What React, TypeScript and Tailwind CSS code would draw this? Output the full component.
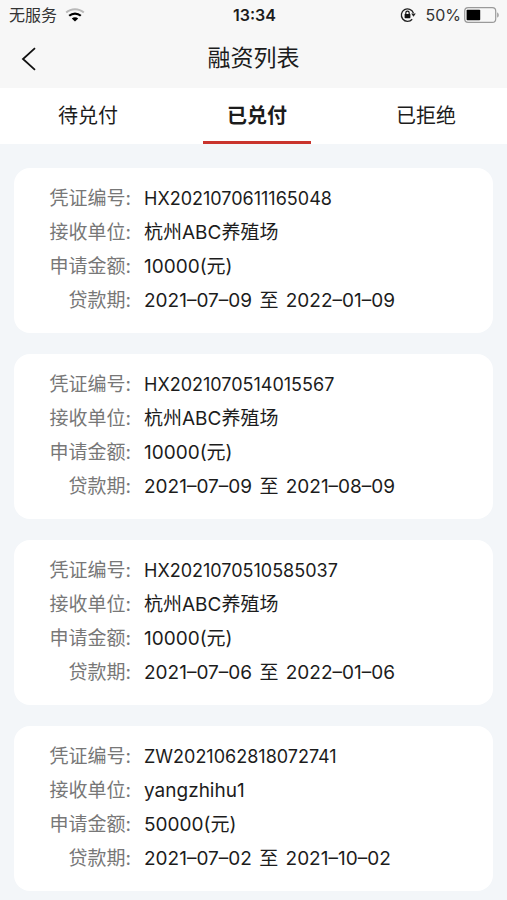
import { useState } from 'react';
import type { ReactNode } from 'react';

const tabs = ['待兑付', '已兑付', '已拒绝'];

const records = [
  { id: 'HX2021070611165048', receiver: '杭州ABC养殖场', amount: 10000, start: '2021–07–09', end: '2022–01–09' },
  { id: 'HX2021070514015567', receiver: '杭州ABC养殖场', amount: 10000, start: '2021–07–09', end: '2021–08–09' },
  { id: 'HX2021070510585037', receiver: '杭州ABC养殖场', amount: 10000, start: '2021–07–06', end: '2022–01–06' },
  { id: 'ZW2021062818072741', receiver: 'yangzhihu1', amount: 50000, start: '2021–07–02', end: '2021–10–02' },
];

function WifiIcon() {
  return (
    <svg width="20" height="14" viewBox="0 0 20 14" fill="none" aria-hidden="true">
      <path d="M1.2 4.6C6.2 0 13.8 0 18.8 4.6" stroke="#b9b9b9" strokeWidth="2" />
      <path d="M4.2 7.8c3.4-3 8.2-3 11.6 0" stroke="#000" strokeWidth="2.2" />
      <path d="M6.8 10.6c1.9-1.7 4.5-1.7 6.4 0L10 13.6z" fill="#000" />
    </svg>
  );
}

function RotationLockIcon() {
  return (
    <svg width="16" height="16" viewBox="0 0 16 16" fill="none" aria-hidden="true">
      <path d="M12.2 12.2A6.2 6.2 0 1 1 13.4 6" stroke="#222" strokeWidth="1.3" />
      <path d="M11.2 6.6h4.6l-2.3 3.2z" fill="#222" />
      <rect x="4.6" y="7" width="5.8" height="4.2" rx="0.6" fill="#111" />
      <path d="M5.8 7.2V5.9a1.7 1.7 0 0 1 3.4 0v1.3" stroke="#111" strokeWidth="1.2" />
    </svg>
  );
}

function BatteryIcon() {
  return (
    <svg width="36" height="16" viewBox="0 0 36 16" fill="none" aria-hidden="true">
      <rect x="0.7" y="0.7" width="31" height="14.6" rx="3.4" stroke="#9a9a9a" strokeWidth="1.2" />
      <rect x="2.6" y="2.8" width="13.6" height="10.4" rx="0.8" fill="#000" />
      <path d="M33.2 5.4c2 .6 2 4.6 0 5.2z" fill="#9a9a9a" />
    </svg>
  );
}

function Row({ label, children }: { label: string; children: ReactNode }) {
  return (
    <div className="flex">
      <dt className="w-[117px] shrink-0 text-right text-[#777]">{label}:</dt>
      <dd className="ml-[13px] text-[#1c1c1c]">{children}</dd>
    </div>
  );
}

export default function App() {
  const [active, setActive] = useState(1);

  return (
    <div className="min-h-screen bg-[#f3f6f9] font-['Inter','Noto_Sans_CJK_SC',sans-serif] text-[#1c1c1c]">
      <header className="bg-[#f7f7f7]">
        {/* Status bar */}
        <div className="grid h-[29px] grid-cols-[1fr_auto_1fr] items-center pr-[7px] pl-[9px] text-base">
          <div className="flex items-center gap-2 text-[#333]">
            <span>无服务</span>
            <WifiIcon />
          </div>
          <span className="font-semibold">13:34</span>
          <div className="flex items-center justify-end">
            <RotationLockIcon />
            <span className="mr-[3px] ml-[9px] text-[#333]">50%</span>
            <BatteryIcon />
          </div>
        </div>

        {/* Title bar */}
        <div className="grid h-[59px] grid-cols-[60px_1fr_60px] items-center">
          <button type="button" aria-label="返回" className="flex h-full items-center pl-[21px]">
            <svg width="16" height="24" viewBox="0 0 16 24" fill="none" aria-hidden="true">
              <path d="M14 1.2 2 12l12 10.8" stroke="#111" strokeWidth="1.8" />
            </svg>
          </button>
          <h1 className="text-center text-[23px]">融资列表</h1>
        </div>
      </header>

      <nav className="flex h-14 justify-between bg-white pr-[27px] pl-[34px]">
        {tabs.map((tab, i) => (
          <button
            key={tab}
            type="button"
            onClick={() => setActive(i)}
            className={
              i === active
                ? 'w-[108px] border-b-3 border-[#c9342d] pt-[2px] text-xl font-bold'
                : 'w-[108px] border-b-3 border-transparent pt-[2px] text-xl'
            }
          >
            {tab}
          </button>
        ))}
      </nav>

      <main className="flex flex-col gap-[21px] px-[14px] pt-6 pb-[11px]">
        {records.map((r) => (
          <dl key={r.id} className="rounded-2xl bg-white pt-[14px] pb-[15px] text-[19px] leading-[34px]">
            <Row label="凭证编号">
              <span className="text-lg leading-[34px]">{r.id}</span>
            </Row>
            <Row label="接收单位">{r.receiver}</Row>
            <Row label="申请金额">{r.amount}(元)</Row>
            <Row label="贷款期">
              {r.start} <span className="mx-[2px]">至</span> {r.end}
            </Row>
          </dl>
        ))}
      </main>
    </div>
  );
}
